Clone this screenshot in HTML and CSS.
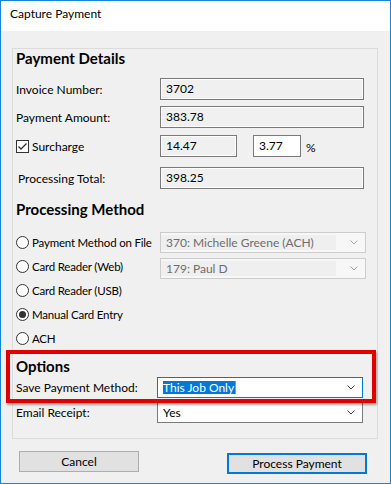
FILE: index.html
```html
<!DOCTYPE html>
<html lang="en">
<head>
    <meta charset="UTF-8">
    <meta name="viewport" content="width=device-width, initial-scale=1.0">
    <title>Capture Payment</title>
    <link rel="stylesheet" href="styles.css">
</head>
<body>
    <div class="window">
        <div class="titlebar">Capture Payment</div>

        <div class="group">
            <h2 class="heading details-heading">Payment Details</h2>

            <div class="row invoice-row">
                <span class="label">Invoice Number:</span>
                <div class="field wide">3702</div>
            </div>
            <div class="row amount-row">
                <span class="label">Payment Amount:</span>
                <div class="field wide">383.78</div>
            </div>
            <div class="row surcharge-row">
                <span class="label check-label">
                    <svg class="checkbox" width="13" height="13" viewBox="0 0 13 13">
                        <rect x="0.5" y="0.5" width="12" height="12" fill="#fff" stroke="#333"/>
                        <polyline points="2.5,6.5 5,9 10.5,3.5" fill="none" stroke="#333" stroke-width="1.3"/>
                    </svg>
                    Surcharge
                </span>
                <div class="field short">14.47</div>
                <div class="field percent">3.77</div>
                <span class="percent-sign">%</span>
            </div>
            <div class="row total-row">
                <span class="label indent">Processing Total:</span>
                <div class="field wide">398.25</div>
            </div>

            <h2 class="heading method-heading">Processing Method</h2>

            <div class="methods">
                <span class="radio">
                    <svg width="13" height="13" viewBox="0 0 13 13"><circle cx="6.5" cy="6.5" r="6" fill="#fff" stroke="#333"/></svg>
                    Payment Method on File
                </span>
                <div class="select disabled first-select">
                    <span class="select-text">370: Michelle Greene (ACH)</span>
                    <svg class="chevron" width="8" height="5" viewBox="0 0 8 5"><polyline points="0.5,0.5 4,4 7.5,0.5" fill="none" stroke="#a8a8a8"/></svg>
                </div>

                <span class="radio">
                    <svg width="13" height="13" viewBox="0 0 13 13"><circle cx="6.5" cy="6.5" r="6" fill="#fff" stroke="#333"/></svg>
                    Card Reader (Web)
                </span>
                <div class="select disabled second-select">
                    <span class="select-text">179: Paul D</span>
                    <svg class="chevron" width="8" height="5" viewBox="0 0 8 5"><polyline points="0.5,0.5 4,4 7.5,0.5" fill="none" stroke="#a8a8a8"/></svg>
                </div>

                <span class="radio full">
                    <svg width="13" height="13" viewBox="0 0 13 13"><circle cx="6.5" cy="6.5" r="6" fill="#fff" stroke="#333"/></svg>
                    Card Reader (USB)
                </span>

                <span class="radio full">
                    <svg width="13" height="13" viewBox="0 0 13 13"><circle cx="6.5" cy="6.5" r="6" fill="#fff" stroke="#333"/><circle cx="6.5" cy="6.5" r="3.5" fill="#333"/></svg>
                    Manual Card Entry
                </span>

                <span class="radio full">
                    <svg width="13" height="13" viewBox="0 0 13 13"><circle cx="6.5" cy="6.5" r="6" fill="#fff" stroke="#333"/></svg>
                    ACH
                </span>
            </div>

            <h2 class="heading options-heading">Options</h2>

            <div class="row option-row save-row">
                <span class="label">Save Payment Method:</span>
                <div class="select focused">
                    <span class="select-text"><span class="highlight">This Job Only</span><span class="caret"></span></span>
                    <svg class="chevron" width="8" height="5" viewBox="0 0 8 5"><polyline points="0.5,0.5 4,4 7.5,0.5" fill="none" stroke="#444"/></svg>
                </div>
            </div>
            <div class="row option-row email-row">
                <span class="label">Email Receipt:</span>
                <div class="select">
                    <span class="select-text">Yes</span>
                    <svg class="chevron" width="8" height="5" viewBox="0 0 8 5"><polyline points="0.5,0.5 4,4 7.5,0.5" fill="none" stroke="#444"/></svg>
                </div>
            </div>
        </div>

        <div class="buttons">
            <button class="btn cancel">Cancel</button>
            <button class="btn primary">Process Payment</button>
        </div>

        <!-- annotation drawn over the dialog -->
        <div class="callout"></div>
    </div>
</body>
</html>
```

FILE: styles.css
```css
*{
    box-sizing: border-box;
}
body{
    margin: 0;
    font-family: Lato, 'Noto Sans', sans-serif;
    font-size: 12px;
    color: #000;
}
.window{
    position: relative;
    width: 391px;
    height: 484px;
    border: 1px solid #1883d7;
    background-color: #f0f0f0;
}
.titlebar{
    height: 30px;
    background-color: #fff;
    padding: 6px 0 0 9px;
    line-height: 14px;
}

.group{
    margin: 17px 12px 0 11px;
    border: 1px solid #dcdcdc;
    padding: 0 3px 15px 3px;
}
.heading{
    margin: 0;
    font-size: 15px;
    font-weight: 700;
    line-height: 18px;
    height: 18px;
}
.details-heading{
    margin-top: 0;
}
.method-heading{
    margin-top: 11px;
}
.options-heading{
    margin-top: 7px;
}

.row{
    display: flex;
    align-items: center;
    height: 22px;
}
.invoice-row{ margin-top: 11px; }
.amount-row{ margin-top: 6px; }
.surcharge-row{ margin-top: 7px; }
.total-row{ margin-top: 10px; }

.label{
    width: 144px;
    flex: none;
}
.indent{
    padding-left: 2px;
}
.check-label{
    display: flex;
    align-items: center;
    gap: 3px;
}
.checkbox{
    flex: none;
}

.field{
    height: 22px;
    border: 1px solid #7a7a7a;
    box-shadow: inset 0 0 0 1px #fff;
    padding-left: 5px;
    line-height: 20px;
    background-color: #f0f0f0;
}
.wide{
    width: 204px;
}
.short{
    width: 77px;
}
.percent{
    width: 48px;
    margin-left: 16px;
    background-color: #fff;
}
.percent-sign{
    margin-left: 5px;
    margin-top: 3px;
}

.methods{
    display: grid;
    grid-template-columns: 144px 206px;
    grid-auto-rows: 24px;
    margin-top: 12px;
}
.radio{
    display: flex;
    align-items: center;
    gap: 3px;
    white-space: nowrap;
    font-size: 11.5px;
    letter-spacing: -0.2px;
}
.radio svg{
    flex: none;
}
.full{
    grid-column: 1 / span 2;
}

.select{
    position: relative;
    display: flex;
    align-items: center;
    height: 21px;
    border: 1px solid #7a7a7a;
    background-color: #fff;
}
.select-text{
    flex: 1;
    display: flex;
    align-items: center;
    height: 100%;
    padding-left: 5px;
}
.chevron{
    flex: none;
    margin: 0 7px 0 5px;
}
.disabled{
    border-color: #cccccc;
    background-color: #f7f7f7;
    color: #6d6d6d;
}
.disabled .select-text{
    background-color: #efefef;
    margin: 2px 14px 2px 0;
    height: 15px;
}
.disabled .chevron{
    margin-left: 0;
}
.first-select{
    align-self: center;
}
.second-select{
    align-self: start;
    margin-top: 4px;
}

.option-row{
    height: 21px;
}
.option-row .label{
    width: 141px;
}
.option-row .select{
    width: 206px;
}
.save-row{ margin-top: 2px; }
.email-row{ margin-top: 4px; }
.focused{
    border-color: #0078d7;
}
.highlight{
    background-color: #0078d7;
    color: #fff;
    line-height: 13px;
    padding: 0 1px 0 0;
}
.caret{
    display: inline-block;
    width: 1px;
    height: 13px;
    background-color: #e08a2a;
}

.buttons{
    display: flex;
    align-items: flex-start;
    margin-top: 12px;
}
.btn{
    font-family: Lato, 'Noto Sans', sans-serif;
    font-size: 12px;
    color: #000;
    background-color: #e1e1e1;
    border: 1px solid #adadad;
    height: 21px;
    padding: 0;
}
.cancel{
    width: 120px;
    margin-left: 18px;
}
.primary{
    width: 140px;
    margin-left: 88px;
    margin-top: 2px;
    border: 2px solid #0078d7;
}

.callout{
    position: absolute;
    left: 5px;
    top: 349px;
    width: 370px;
    height: 53px;
    border: 4px solid #e00000;
    box-shadow: 1px 2px 2px rgba(0, 0, 0, 0.35);
}
```
